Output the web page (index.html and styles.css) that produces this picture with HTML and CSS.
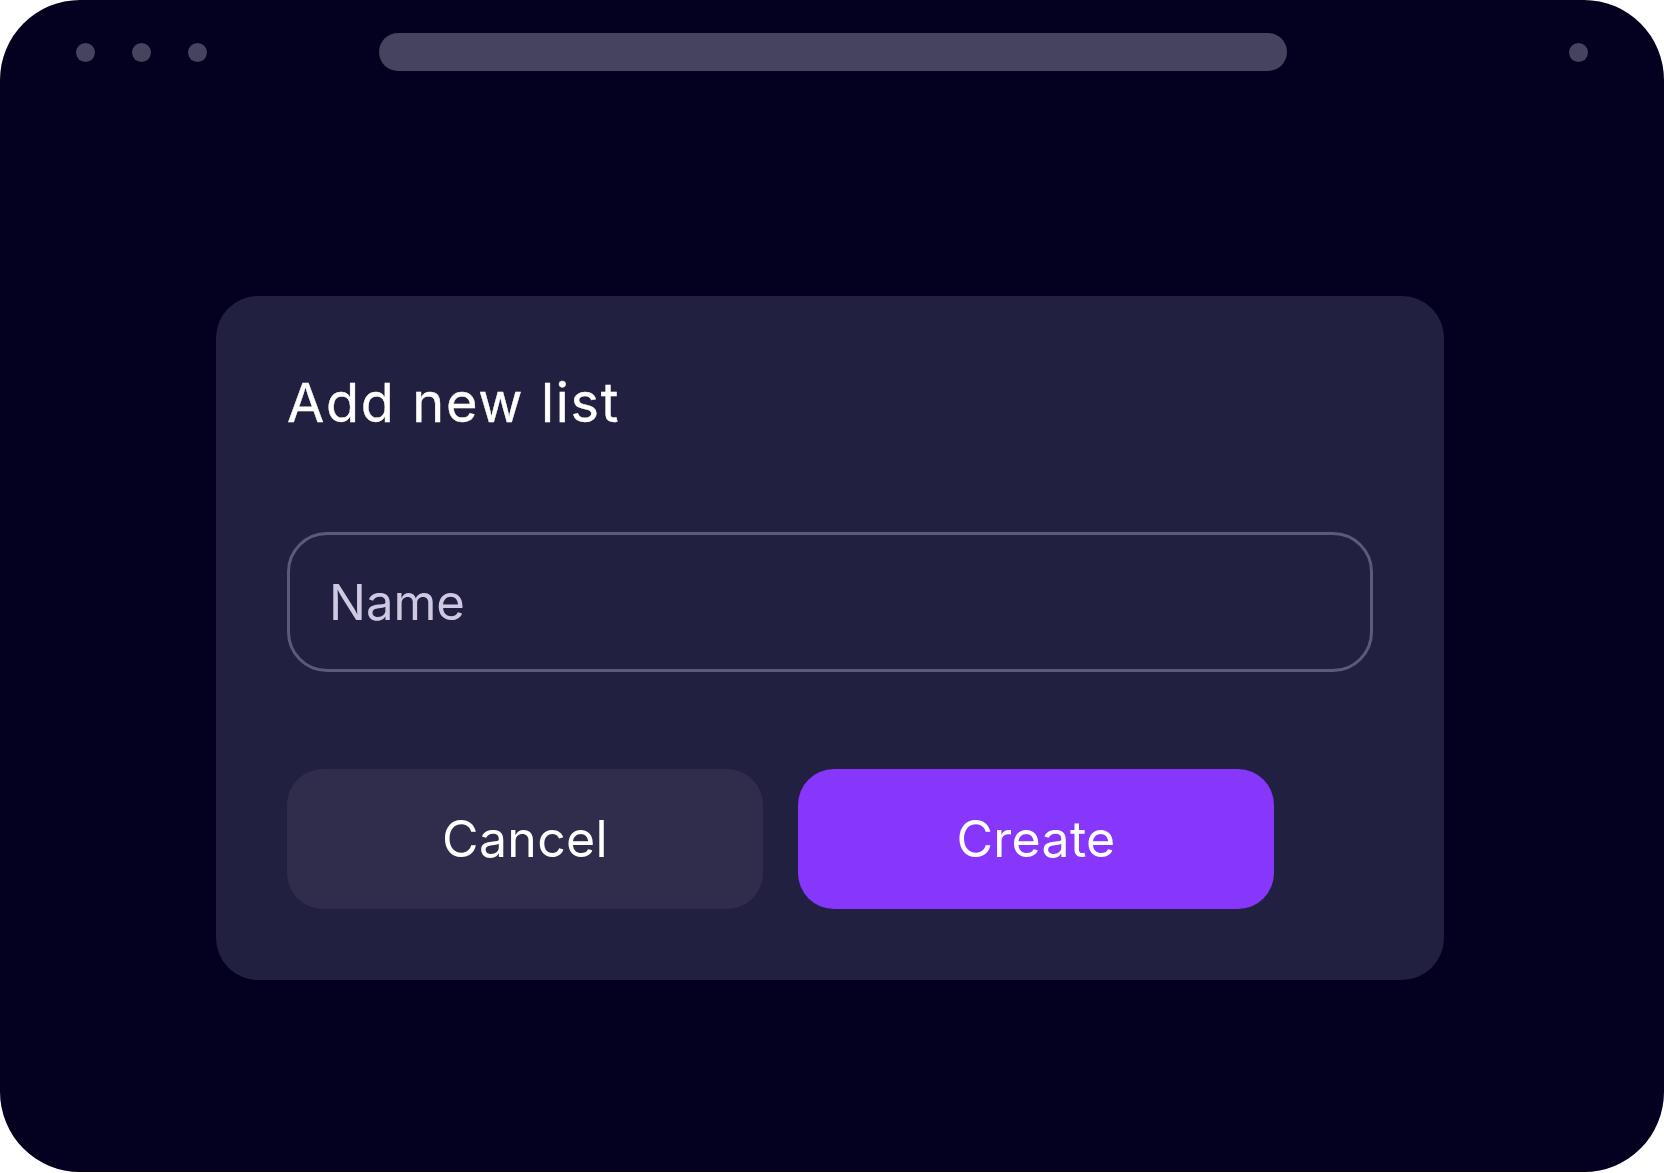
FILE: index.html
```html
<!DOCTYPE html>
<html lang="en">
<head>
<meta charset="utf-8">
<title>Add new list</title>
<link rel="stylesheet" href="styles.css">
</head>
<body>
<div class="frame">
  <header class="topbar">
    <div class="dots">
      <span class="dot"></span>
      <span class="dot"></span>
      <span class="dot"></span>
    </div>
    <div class="address"></div>
    <span class="dot dot-right"></span>
  </header>
  <section class="dialog">
    <h2 class="title">Add new list</h2>
    <div class="field">
      <input class="input" type="text" placeholder="Name">
    </div>
    <div class="actions">
      <button class="btn btn-cancel">Cancel</button>
      <button class="btn btn-create">Create</button>
    </div>
  </section>
</div>
</body>
</html>
```
FILE: styles.css
```css
html, body {
  margin: 0;
  padding: 0;
  background: #ffffff;
}
body {
  font-family: Inter, "Noto Sans", sans-serif;
}
.frame {
  width: 1664px;
  height: 1172px;
  background: #030020;
  border-radius: 80px;
  overflow: hidden;
  box-sizing: border-box;
}
.topbar {
  display: flex;
  align-items: center;
  height: 38px;
  padding-top: 33px;
  padding-left: 76px;
  padding-right: 76px;
}
.dots {
  display: flex;
  gap: 37px;
}
.dot {
  display: block;
  width: 19px;
  height: 19px;
  border-radius: 50%;
  background: #46435f;
}
.address {
  margin-left: 172px;
  width: 908px;
  height: 38px;
  border-radius: 19px;
  background: #46435f;
}
.dot-right {
  margin-left: auto;
}
.dialog {
  margin-top: 225px;
  margin-left: 216px;
  width: 1228px;
  height: 684px;
  box-sizing: border-box;
  background: #222040;
  border-radius: 42px;
  padding: 0 71px;
  display: flex;
  flex-direction: column;
}
.title {
  margin: 74px 0 0;
  font-size: 54px;
  font-weight: 400;
  line-height: 66px;
  color: #ffffff;
  letter-spacing: 1.7px;
  -webkit-text-stroke: 0.4px #ffffff;
}
.field {
  margin-top: 96px;
}
.input {
  display: block;
  width: 1086px;
  height: 140px;
  box-sizing: border-box;
  border: 3px solid #5c5a78;
  border-radius: 40px;
  background: transparent;
  padding: 0 0 0 39px;
  font-family: Inter, "Noto Sans", sans-serif;
  font-size: 49px;
  color: #ffffff;
  outline: none;
  letter-spacing: 0;
}
.input::placeholder {
  color: #cfc8e3;
  opacity: 1;
}
.actions {
  margin-top: 97px;
  display: flex;
  gap: 35px;
}
.btn {
  width: 476px;
  height: 140px;
  border: none;
  border-radius: 36px;
  font-family: Inter, "Noto Sans", sans-serif;
  font-size: 50px;
  color: #ffffff;
  letter-spacing: 0.3px;
  padding: 0;
}
.btn-cancel {
  background: #302c4c;
}
.btn-create {
  background: #8736fb;
}
```
